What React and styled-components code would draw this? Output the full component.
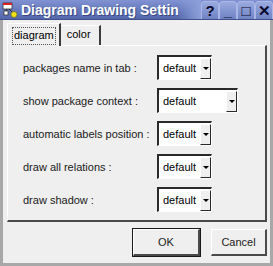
import React from "react";
import styled, { createGlobalStyle } from "styled-components";

const Global = createGlobalStyle`
  html, body { margin: 0; padding: 0; background: #efefef; }
  body { font-family: "Liberation Sans", Arial, sans-serif; }
`;

const Window = styled.div`
  width: 273px;
  height: 266px;
  box-sizing: border-box;
  display: flex;
  flex-direction: column;
  background: #a8a8a8;
  overflow: hidden;
`;

const TitleBar = styled.div`
  height: 20px;
  flex: none;
  display: flex;
  align-items: center;
  background: linear-gradient(#8193d2 0%, #6a7dc0 45%, #5467ab 100%);
  border-bottom: 1px solid #3f4f8c;
  box-sizing: border-box;
`;

const AppIcon = styled.svg`
  width: 16px;
  height: 16px;
  margin: 0 3px 0 2px;
  flex: none;
`;

const Title = styled.div`
  flex: none;
  width: 157px;
  overflow: hidden;
  white-space: nowrap;
  color: #fff;
  font-weight: bold;
  font-size: 14px;
  text-shadow: 1px 1px 0 #3a4780;
`;

const TitleFade = styled.div`
  flex: 1;
  align-self: stretch;
  background: linear-gradient(90deg, rgba(140, 160, 220, 0) 0%, #8ea0da 100%);
`;

const TitleButtons = styled.div`
  display: flex;
  align-self: stretch;
  padding-top: 1px;
`;

const TitleButton = styled.div`
  width: 18px;
  box-sizing: border-box;
  display: flex;
  align-items: center;
  justify-content: center;
  border: 1px solid #a9b6e6;
  border-bottom: none;
  border-radius: 4px 4px 0 0;
  background: linear-gradient(#9aaae0, #6f82c4);
  color: #0a0a2a;
  font-size: 15px;
  font-weight: bold;
  line-height: 1;
`;

const Client = styled.div`
  flex: 1;
  margin: 0 3px 3px 3px;
  background: #efefef;
  display: flex;
  flex-direction: column;
  padding: 3px 3px 0 4px;
  box-sizing: border-box;
`;

const TabBar = styled.div`
  display: flex;
  align-items: flex-end;
  height: 22px;
  flex: none;
`;

const Tab = styled.div`
  box-sizing: border-box;
  height: ${(p) => (p.$active ? 23 : 20)}px;
  margin-bottom: ${(p) => (p.$active ? -1 : 0)}px;
  padding: ${(p) => (p.$active ? "3px 3px 0 4px" : "2px 8px 0 5px")};
  border-left: 1px solid ${(p) => (p.$active ? "#ffffff" : "transparent")};
  border-top: 1px solid #ffffff;
  border-right: 2px solid #3c3c3c;
  background: #efefef;
  font-size: 11px;
  color: #000;
  position: relative;
  z-index: ${(p) => (p.$active ? 1 : 0)};
`;

const Focus = styled.span`
  display: inline-block;
  border: 1px dotted #555;
  padding: 1px 1px 2px 1px;
  line-height: 13px;
`;

const Panel = styled.div`
  height: 177px;
  flex: none;
  box-sizing: border-box;
  border-top: 1px solid #ffffff;
  border-left: 1px solid #ffffff;
  border-right: 2px solid #4a4a4a;
  border-bottom: 2px solid #4a4a4a;
  padding: 9px 0 0 15px;
  display: grid;
  grid-template-columns: 134px auto;
  grid-auto-rows: 25px;
  row-gap: 8px;
  align-items: center;
  justify-items: start;
  align-content: start;
`;

const Label = styled.div`
  font-size: 11px;
  color: #1a1a1a;
  white-space: nowrap;
`;

const Combo = styled.div`
  width: ${(p) => p.$w}px;
  height: 25px;
  box-sizing: border-box;
  display: flex;
  align-items: stretch;
  background: #fff;
  border-style: solid;
  border-width: 2px 1px 1px 2px;
  border-color: #2a2a2a #ffffff #ffffff #2a2a2a;
  box-shadow: inset 0 0 0 0 transparent;
`;

const ComboText = styled.div`
  flex: 1;
  display: flex;
  align-items: center;
  padding-left: 4px;
  font-size: 11px;
  color: #000;
`;

const ComboArrow = styled.div`
  width: 11px;
  flex: none;
  box-sizing: border-box;
  margin: 1px 0 0 0;
  display: flex;
  align-items: center;
  justify-content: center;
  background: #efefef;
  border-left: 1px solid #ffffff;
  border-top: 1px solid #ffffff;
  border-right: 1px solid #2a2a2a;
  border-bottom: 1px solid #2a2a2a;
  &::after {
    content: "";
    border-left: 3px solid transparent;
    border-right: 3px solid transparent;
    border-top: 3px solid #000;
  }
`;

const ButtonRow = styled.div`
  display: flex;
  justify-content: flex-end;
  gap: 11px;
  margin-top: 7px;
  padding-right: 0px;
`;

const Button = styled.div`
  width: ${(p) => p.$w}px;
  height: 27px;
  box-sizing: border-box;
  display: flex;
  align-items: center;
  justify-content: center;
  font-size: 11px;
  color: #222;
  background: #efefef;
  border-style: solid;
  border-width: 1px 2px 2px 1px;
  border-color: #ffffff #4a4a4a #4a4a4a #ffffff;
  outline: ${(p) => (p.$default ? "1px solid #1a1a1a" : "none")};
  outline-offset: 0px;
`;

const rows = [
  ["packages name in tab :", 55],
  ["show package context :", 81],
  ["automatic labels position :", 55],
  ["draw all relations :", 55],
  ["draw shadow :", 55],
];

export default function App() {
  return (
    <>
      <Global />
      <Window>
        <TitleBar>
          <AppIcon viewBox="0 0 16 16">
            <rect x="1" y="1" width="9" height="6" fill="#fff" stroke="#333" strokeWidth="0.8" />
            <rect x="1" y="1" width="9" height="2" fill="#d22" />
            <rect x="2" y="9" width="4" height="4" fill="#fff" stroke="#333" strokeWidth="0.8" />
            <line x1="5" y1="7" x2="4" y2="9" stroke="#222" strokeWidth="1" />
            <line x1="7" y1="7" x2="11" y2="11" stroke="#222" strokeWidth="1" />
            <circle cx="12" cy="12.5" r="3" fill="#f2e21a" stroke="#6a6a20" strokeWidth="0.7" />
          </AppIcon>
          <Title>Diagram Drawing Settings</Title>
          <TitleFade />
          <TitleButtons>
            <TitleButton>?</TitleButton>
            <TitleButton>_</TitleButton>
            <TitleButton>□</TitleButton>
            <TitleButton>✕</TitleButton>
          </TitleButtons>
        </TitleBar>
        <Client>
          <TabBar>
            <Tab $active>
              <Focus>diagram</Focus>
            </Tab>
            <Tab>color</Tab>
          </TabBar>
          <Panel>
            {rows.map(([label, w]) => (
              <React.Fragment key={label}>
                <Label>{label}</Label>
                <Combo $w={w}>
                  <ComboText>default</ComboText>
                  <ComboArrow />
                </Combo>
              </React.Fragment>
            ))}
          </Panel>
          <ButtonRow>
            <Button $w={67} $default>OK</Button>
            <Button $w={56}>Cancel</Button>
          </ButtonRow>
        </Client>
      </Window>
    </>
  );
}
